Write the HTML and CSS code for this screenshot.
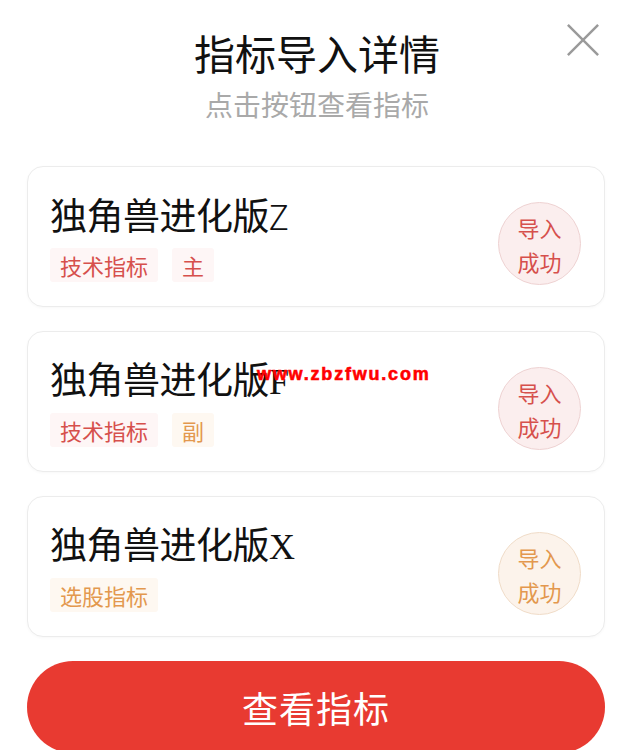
FILE: index.html
```html
<!DOCTYPE html>
<html lang="zh-CN">
<head>
  <meta charset="UTF-8">
  <title>指标导入详情</title>
  <link rel="stylesheet" href="styles.css">
</head>
<body>

<div class="sheet">
  <div class="header">
    <h2>指标导入详情</h2>
    <p class="sub">点击按钮查看指标</p>
    <button class="close-btn" aria-label="关闭">
      <svg viewBox="0 0 36 36">
        <path d="M2 2L34 34M34 2L2 34"/>
      </svg>
    </button>
  </div>

  <div class="list">
    <div class="card">
      <div class="info">
        <div class="name">独角兽进化版<span class="latin sans">Z</span></div>
        <div class="tags">
          <span class="tag red">技术指标</span>
          <span class="tag red">主</span>
        </div>
      </div>
      <div class="badge red">导入<br>成功</div>
    </div>

    <div class="card">
      <div class="info">
        <div class="name">独角兽进化版<span class="latin">F</span></div>
        <div class="tags">
          <span class="tag red">技术指标</span>
          <span class="tag orange">副</span>
        </div>
      </div>
      <div class="badge red">导入<br>成功</div>
    </div>

    <div class="card">
      <div class="info">
        <div class="name">独角兽进化版<span class="latin">X</span></div>
        <div class="tags">
          <span class="tag orange">选股指标</span>
        </div>
      </div>
      <div class="badge orange">导入<br>成功</div>
    </div>
  </div>

  <button class="view-btn">查看指标</button>

  <div class="watermark">www.zbzfwu.com</div>
</div>

</body>
</html>
```

FILE: styles.css
```css
body {
  margin: 0;
  background: #ffffff;
  font-family: "Noto Sans CJK SC", "Noto Sans", sans-serif;
  color: #111111;
  overflow: hidden;
}

.sheet {
  position: relative;
  padding: 28px 34px 0 27px;
}

.header {
  position: relative;
  text-align: center;
  padding-left: 2px;
}

.header h2 {
  margin: 0;
  font-size: 41px;
  line-height: 48px;
  font-weight: 400;
  color: #111111;
}

.header .sub {
  margin: 11px 0 0;
  font-size: 28px;
  line-height: 34px;
  color: #a9a9a9;
}

.close-btn {
  position: absolute;
  top: -5px;
  right: 4px;
  width: 36px;
  height: 36px;
  padding: 0;
  border: none;
  background: none;
}

.close-btn svg {
  width: 36px;
  height: 34px;
  stroke: #9a9a9a;
  stroke-width: 2.6;
  fill: none;
}

.list {
  display: flex;
  flex-direction: column;
  gap: 24px;
  margin-top: 45px;
}

.card {
  display: flex;
  align-items: center;
  justify-content: space-between;
  height: 141px;
  box-sizing: border-box;
  padding: 0 23px 0 22px;
  border: 1px solid #ececec;
  border-radius: 16px;
  background: #ffffff;
  box-shadow: 0 1px 3px rgba(0, 0, 0, 0.03);
}

.name {
  font-size: 37px;
  line-height: 44px;
  color: #111111;
  letter-spacing: -0.5px;
}

.name .latin {
  font-family: "Liberation Serif", serif;
  font-size: 36px;
}

.name .latin.sans {
  font-family: "Noto Sans", sans-serif;
  font-weight: 300;
  font-size: 34px;
}

.tags {
  display: flex;
  gap: 14px;
  margin-top: 9px;
}

.tag {
  padding: 0 10px;
  font-size: 22px;
  line-height: 34px;
  border-radius: 3px;
}

.tag.red {
  color: #d6504c;
  background: #fef6f6;
}

.tag.orange {
  color: #e3984e;
  background: #fef8f1;
}

.badge {
  width: 81px;
  height: 81px;
  margin-top: 14px;
  border-radius: 50%;
  display: flex;
  align-items: center;
  justify-content: center;
  text-align: center;
  font-size: 22px;
  line-height: 34px;
}

.badge.red {
  color: #d6504c;
  background: #fbeeee;
  border: 1px solid #eed2d2;
}

.badge.orange {
  color: #e3984e;
  background: #fcf3eb;
  border: 1px solid #f0dcc8;
}

.view-btn {
  display: block;
  width: 100%;
  height: 92px;
  margin-top: 24px;
  border: none;
  border-radius: 46px;
  background: #e83a31;
  color: #ffffff;
  font-family: "Noto Sans CJK SC", "Noto Sans", sans-serif;
  font-size: 36px;
  letter-spacing: 1px;
}

.watermark {
  position: absolute;
  top: 364px;
  left: 257px;
  font-family: "Liberation Sans", Arial, sans-serif;
  font-weight: 700;
  font-size: 18px;
  letter-spacing: 1.8px;
  color: #ff0000;
  -webkit-text-stroke: 0.6px #ff0000;
}
```
